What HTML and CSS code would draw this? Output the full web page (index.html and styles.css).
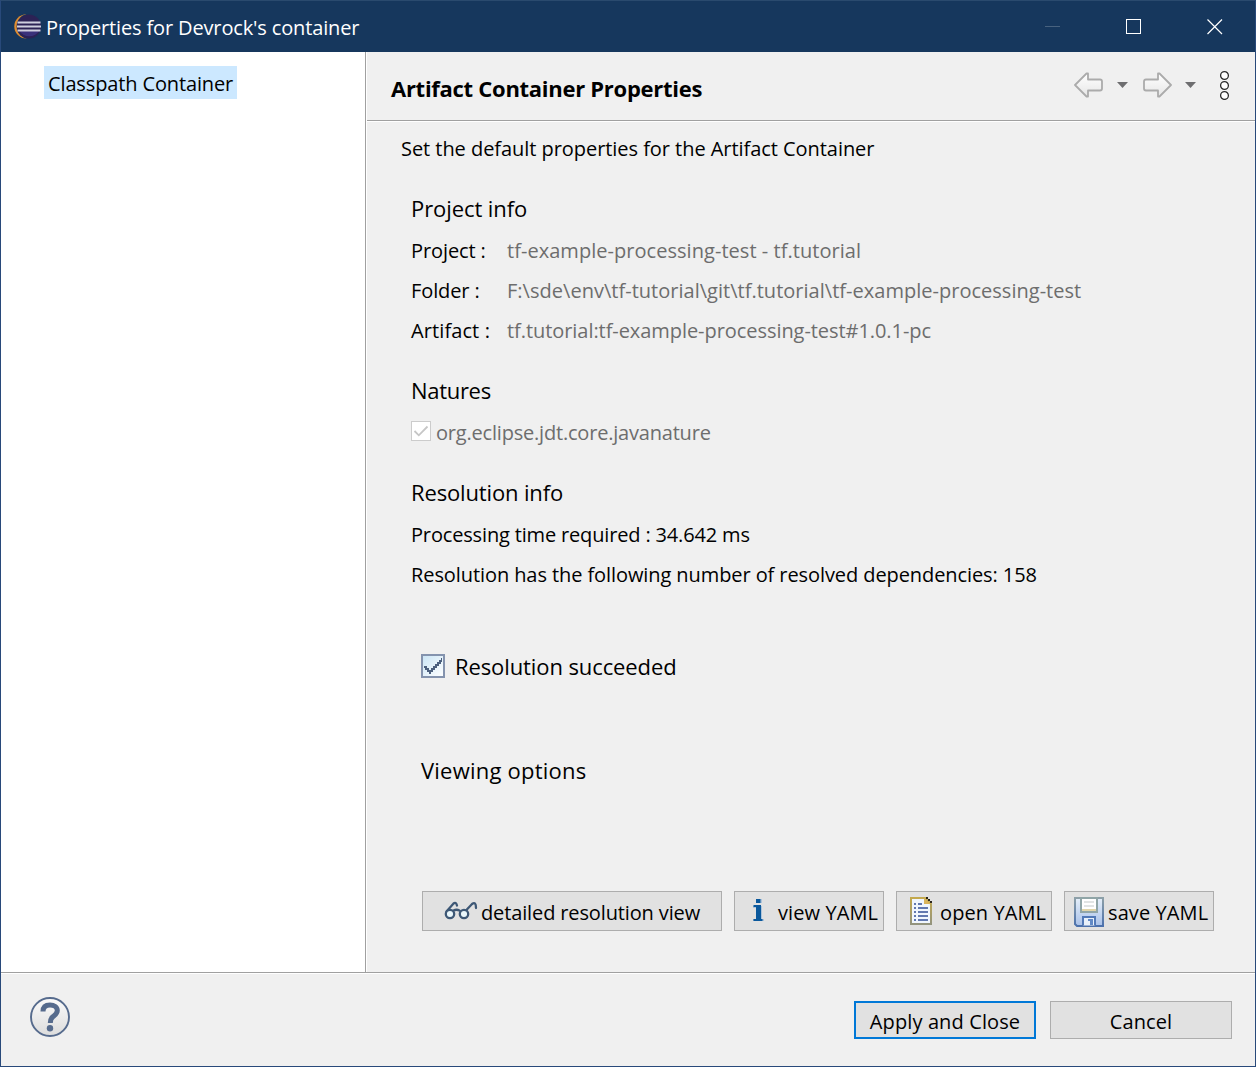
FILE: index.html
```
<!DOCTYPE html>
<html lang="en">
<head>
<meta charset="utf-8">
<title>Properties for Devrock's container</title>
<link rel="stylesheet" href="styles.css">
</head>
<body>
<div class="window">
  <header class="titlebar">
    <svg class="logo" width="28" height="28" viewBox="0 0 28 28">
      <path d="M13.500 1.200A12.200 12.200 0 0 0 13.500 25.600V13Z" fill="#e08c30"/>
      <circle cx="16.200" cy="13.400" r="12.600" fill="#16375d"/>
      <circle cx="16" cy="13.400" r="12" fill="#2c2255"/>
      <path d="M6 17.500h20.500a12 12 0 0 1-20.500 0Z" fill="#40388a" opacity=".7"/>
      <path d="M4.500 9.500h23M4 13.500h24M4.500 17.500h23" stroke="#cfcfdf" stroke-width="2.100"/>
    </svg>
    <span class="window-name">Properties for Devrock's container</span>
    <div class="window-controls">
      <svg width="81" height="51" viewBox="0 0 81 51"><path d="M32 25.500h15" stroke="#48627f"/></svg>
      <svg width="81" height="51" viewBox="0 0 81 51"><rect x="32.500" y="18.500" width="14" height="14" fill="none" stroke="#fff"/></svg>
      <svg width="80" height="51" viewBox="0 0 80 51"><path d="M32.500 18.500l14.500 14.500M47 18.500L32.500 33" fill="none" stroke="#fff" stroke-width="1.200"/></svg>
    </div>
  </header>

  <div class="body">
    <nav class="sidebar"><div class="tree-item">Classpath Container</div></nav>
    <main class="page">
      <div class="page-header">
        <h1 class="page-title">Artifact Container Properties</h1>
        <div class="toolbar">
          <svg width="30" height="26" viewBox="0 0 30 26"><path d="M1 13L12.500 1.500H14V7.500H26Q28 7.500 28 9.500V16.500Q28 18.500 26 18.500H14V24.500H12.500Z" fill="url(#arrow-fill)" stroke="#ababab" stroke-width="1.800" stroke-linejoin="round"/>
            <defs><linearGradient id="arrow-fill" x1="0" y1="0" x2="0" y2="1"><stop offset="0" stop-color="#fff"/><stop offset="1" stop-color="#e6e6e6"/></linearGradient></defs></svg>
          <svg class="drop" width="11" height="6" viewBox="0 0 11 6"><path d="M0 0h11L5.500 6Z" fill="#6e6e70"/></svg>
          <svg class="forward" width="30" height="26" viewBox="0 0 30 26"><path d="M29 13L17.500 1.500H16V7.500H4Q2 7.500 2 9.500V16.500Q2 18.500 4 18.500H16V24.500H17.500Z" fill="url(#arrow-fill)" stroke="#ababab" stroke-width="1.800" stroke-linejoin="round"/></svg>
          <svg class="drop" width="11" height="6" viewBox="0 0 11 6"><path d="M0 0h11L5.500 6Z" fill="#6e6e70"/></svg>
          <svg class="more" width="10" height="30" viewBox="0 0 10 30"><g fill="#fff" stroke="#2b2b2b" stroke-width="1.300"><circle cx="4.500" cy="5.500" r="3.900"/><circle cx="4.500" cy="15.500" r="3.900"/><circle cx="4.500" cy="25.500" r="3.900"/></g></svg>
        </div>
      </div>

      <div class="content">
        <p class="description">Set the default properties for the Artifact Container</p>

        <section class="group">
          <h2 class="group-title">Project info</h2>
          <dl class="fields">
            <dt>Project :</dt><dd class="project">tf-example-processing-test - tf.tutorial</dd>
            <dt>Folder :</dt><dd class="folder">F:\sde\env\tf-tutorial\git\tf.tutorial\tf-example-processing-test</dd>
            <dt class="artifact-label">Artifact :</dt><dd>tf.tutorial:tf-example-processing-test#1.0.1-pc</dd>
          </dl>
        </section>

        <section class="group">
          <h2 class="group-title natures">Natures</h2>
          <div class="nature">
            <svg width="20" height="20" viewBox="0 0 20 20"><rect x=".5" y=".5" width="19" height="19" fill="#fff" stroke="#ccc"/><path d="M3.500 10L7.800 14.300L16.500 5.500" fill="none" stroke="#c6c6c6" stroke-width="1.800"/></svg>
            <span>org.eclipse.jdt.core.javanature</span>
          </div>
        </section>

        <section class="group">
          <h2 class="group-title resolution">Resolution info</h2>
          <p class="line time">Processing time required : 34.642 ms</p>
          <p class="line">Resolution has the following number of resolved dependencies: 158</p>
        </section>

        <div class="status">
          <svg width="24" height="24" viewBox="0 0 24 24">
            <defs><linearGradient id="check-fill" x1="0" y1="0" x2="1" y2="1"><stop offset="0" stop-color="#c9e4f5"/><stop offset="1" stop-color="#fff"/></linearGradient></defs>
            <rect x="1" y="1" width="22" height="22" fill="url(#check-fill)" stroke="#8493ae" stroke-width="2"/>
            <path d="M3 12h3v2h2v2h2v-2h2v-2h2v-2h2V8h2V6h2V4h1v4h-1v2h-2v2h-2v2h-2v2h-2v2h-2v2H8v-2H6v-2H4v-2H3z" fill="#4c607e"/>
          </svg>
          <span>Resolution succeeded</span>
        </div>

        <h2 class="viewing">Viewing options</h2>

        <div class="actions">
          <button class="button detailed">
            <svg width="34" height="22" viewBox="0 0 34 22"><g fill="none" stroke="#3e5876" stroke-width="2.300" stroke-linecap="round"><path d="M2.500 11.500L9.500 3.500Q12 1.500 13 5.500M21 11.500L28 4Q32 1 32 8"/><path d="M9.500 10.500q3-1.500 6 0"/><circle cx="6" cy="14" r="4.200" fill="#eaf7fb"/><circle cx="20" cy="14" r="4.200" fill="#eaf7fb"/></g></svg>
            <span>detailed resolution view</span>
          </button>
          <button class="button view">
            <svg width="12" height="24" viewBox="0 0 12 24"><path d="M5 1h5v4H5zM3 8h7v13h2v2H1v-2h3V10H1V8z" fill="#9dbbd8" opacity=".75"/><path d="M4 1H8.500v4H4zM1.500 7H9v14H10.500v2H1.500v-2H4V9H1.500z" fill="#0a589c"/></svg>
            <span>view YAML</span>
          </button>
          <button class="button open">
            <svg width="22" height="28" viewBox="0 0 22 28">
              <defs><linearGradient id="doc-edge" x1="0" y1="0" x2="0" y2="1"><stop offset="0" stop-color="#c4a94e"/><stop offset="1" stop-color="#93947e"/></linearGradient></defs>
              <path d="M1 1H15L21 7V27H1Z" fill="#f0f6fe" stroke="url(#doc-edge)" stroke-width="2"/>
              <path d="M14 1V7H21Z" fill="#d9b45c"/>
              <path d="M16 0h2v2h2v2h2v2h-2V4h-2V2h-2z" fill="#29251b"/>
              <path d="M4 7h2M8 7h4M4 11h2M8 11h10M4 15h2M8 15h10M4 19h2M8 19h10M4 23h2M8 23h10" stroke="#6178b0" stroke-width="2"/>
            </svg>
            <span>open YAML</span>
          </button>
          <button class="button save">
            <svg width="30" height="30" viewBox="0 0 30 30">
              <defs><linearGradient id="disk-fill" x1="0" y1="0" x2="0" y2="1"><stop offset="0" stop-color="#e5effa"/><stop offset="1" stop-color="#a9c1e8"/></linearGradient>
              <linearGradient id="disk-edge" x1="0" y1="0" x2="0" y2="1"><stop offset="0" stop-color="#8da0a8"/><stop offset="1" stop-color="#4c71ad"/></linearGradient></defs>
              <path d="M1 1H29V29H3L1 27Z" fill="url(#disk-fill)" stroke="url(#disk-edge)" stroke-width="2"/>
              <path d="M7 1H23V15H7Z" fill="#fff" stroke="#90a5a7" stroke-width="2"/>
              <path d="M10 5h10M10 9h10" stroke="#d8dcdc" stroke-width="1.500"/><path d="M8 13h14" stroke="#e1d5a9" stroke-width="2"/>
              <path d="M9 28.500V20H21V28.500" fill="#e8f0fa" stroke="#5279b7" stroke-width="2"/><path d="M14 22h5v6h-3v-4h-2z" fill="#6189c6"/>
            </svg>
            <span>save YAML</span>
          </button>
        </div>
      </div>
    </main>
  </div>

  <footer class="footer">
    <svg class="help" width="40" height="40" viewBox="0 0 40 40">
      <defs><linearGradient id="help-fill" x1="0" y1="0" x2="0" y2="1"><stop offset="0" stop-color="#fbfbfb"/><stop offset="1" stop-color="#dcdcdc"/></linearGradient></defs>
      <circle cx="20" cy="20" r="19" fill="url(#help-fill)" stroke="#566b8d" stroke-width="1.900"/>
      <path d="M13 14.500C13 10 15.700 8 20 8C24.300 8 27.300 10 27.300 13.500C27.300 16.500 25.300 17.800 23.100 19.500C21.100 21 20.300 22 20.300 26" fill="none" stroke="#566b8d" stroke-width="5"/>
      <circle cx="20" cy="31.200" r="3.200" fill="#566b8d"/>
    </svg>
    <button class="button dialog-button primary">Apply and Close</button>
    <button class="button dialog-button">Cancel</button>
  </footer>
</div>
</body>
</html>
```
FILE: styles.css
```
* { box-sizing: border-box; }
body, h1, h2, p, dl, dd { margin: 0; }
body {
  font: 20px/40px "Open Sans", "Noto Sans", sans-serif;
  color: #000;
  white-space: nowrap;
}
svg { display: block; flex: none; }
.window {
  width: 1256px;
  height: 1067px;
  display: flex;
  flex-direction: column;
  background: #f0f0f0;
  border: 1px solid #28497a;
  border-top-color: #2a4a6e;
}
.titlebar {
  height: 51px;
  flex: none;
  display: flex;
  align-items: center;
  padding-left: 12px;
  background: #16375d;
  color: #fff;
}
.logo { margin-right: 5px; }
.window-name { padding-top: 2px; letter-spacing: -.14px; }
.window-controls { display: flex; margin-left: auto; }

.body { flex: 1; display: flex; min-height: 0; }
.sidebar {
  width: 365px;
  flex: none;
  padding: 14px 0 0 43px;
  background: #fff;
  border-right: 1px solid #a0a0a0;
}
.tree-item {
  width: 193px;
  height: 33px;
  padding-left: 4px;
  line-height: 36px;
  letter-spacing: -.13px;
  background: #cce8ff;
}
.page { flex: 1; border-left: 1px solid #fff; }
.page-header {
  height: 69px;
  display: flex;
  align-items: center;
  padding: 0 25px 2px 24px;
  border-bottom: 1px solid #a0a0a0;
}
.page-title { font-size: 22px; font-weight: 700; padding-top: 5px; letter-spacing: -.28px; }
.toolbar { display: flex; align-items: center; margin-left: auto; }
.drop { margin-left: 13px; }
.forward { margin-left: 14px; }
.more { margin-left: 24px; }

.content { border-top: 1px solid #fff; padding: 7px 0 0 44px; }
.description { margin-left: -10px; letter-spacing: -.05px; }
.group { margin-top: 20px; }
.group-title, .viewing, .status { font-size: 22px; font-weight: 400; }
.group-title { margin-top: -1px; margin-bottom: 3px; letter-spacing: -.08px; }
.group-title.natures { letter-spacing: -.3px; }
.group-title.resolution { letter-spacing: -.15px; }
.fields { display: grid; grid-template-columns: 96px 1fr; }
.fields dt { letter-spacing: -.1px; }
.fields dd { color: #6d6d6d; letter-spacing: -.06px; }
.fields .project { letter-spacing: .04px; }
.fields .folder { letter-spacing: .02px; }
.fields .artifact-label { letter-spacing: .1px; }
.nature {
  display: flex;
  align-items: center;
  gap: 5px;
  color: #6d6d6d;
  letter-spacing: -.2px;
}
.nature svg { margin-bottom: 4px; }
.line { letter-spacing: -.085px; }
.time { letter-spacing: -.16px; }
.status {
  display: flex;
  align-items: center;
  gap: 10px;
  margin: 51px 0 0 10px;
  letter-spacing: -.1px;
}
.viewing { margin: 64px 0 0 10px; letter-spacing: .22px; }
.actions { display: flex; gap: 12px; margin: 101px 0 0 11px; }

.button {
  display: flex;
  align-items: center;
  padding: 0;
  font: inherit;
  line-height: 36px;
  color: #000;
  background: #e1e1e1;
  border: 1px solid #adadad;
  border-radius: 0;
}
.actions .button { height: 40px; letter-spacing: .1px; }
.actions span { padding-top: 3px; }
.actions .detailed { width: 300px; padding-left: 21px; gap: 3px; letter-spacing: -.13px; }
.view { width: 150px; padding-left: 17px; gap: 14px; }
.view svg { margin-bottom: 2px; }
.open { width: 156px; padding-left: 13px; gap: 8px; }
.save { width: 150px; padding: 2px 0 0 9px; gap: 4px; }
.save span { padding-top: 1px; }

.footer {
  height: 94px;
  flex: none;
  display: flex;
  align-items: center;
  padding: 0 23px 6px 29px;
  border-top: 1px solid #a0a0a0;
  box-shadow: inset 0 1px #fff;
}
.help { margin-right: auto; }
.dialog-button {
  width: 182px;
  height: 38px;
  margin: 6px 0 0 14px;
  padding-top: 4px;
  justify-content: center;
  letter-spacing: .12px;
}
.primary { border: 2px solid #0078d7; }
```
